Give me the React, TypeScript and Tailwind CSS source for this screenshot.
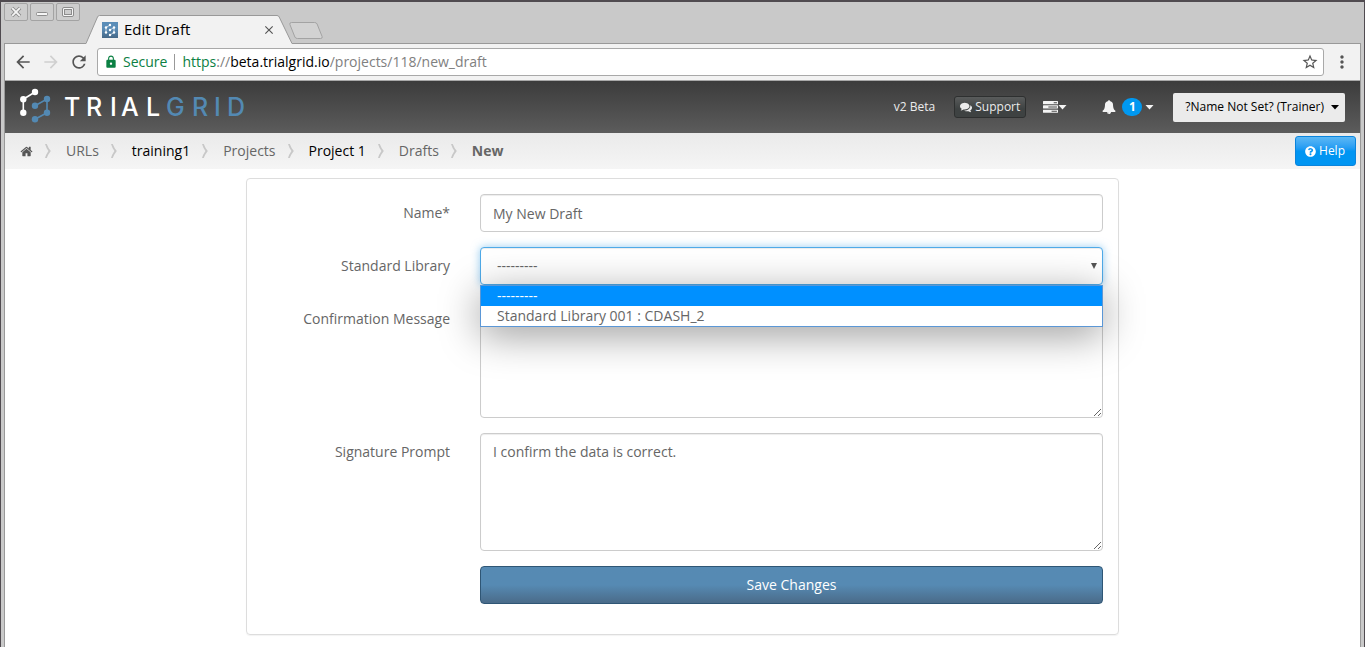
import React, { useState } from "react";
import { FaQuestionCircle } from "react-icons/fa";
import { MdArrowBack, MdArrowForward, MdRefresh, MdLock, MdStarBorder, MdMoreVert, MdClose } from "react-icons/md";

function Glyph({ d, className }: { d: string; className: string }) {
  return (
    <svg viewBox="0 0 1792 1792" className={className} fill="currentColor" aria-hidden="true">
      <path d={d} />
    </svg>
  );
}

const HOME =
  "M1472 992v480q0 26-19 45t-45 19h-384v-384h-256v384h-384q-26 0-45-19t-19-45v-480q0-1 .5-3t.5-3l575-474 575 474q1 2 1 6zm223-69l-62 74q-8 9-21 11h-3q-13 0-21-7l-692-577-692 577q-12 8-24 7-13-2-21-11l-62-74q-8-10-7-23.5t11-21.5l719-599q32-26 76-26t76 26l244 204v-195q0-14 9-23t23-9h192q14 0 23 9t9 23v408l219 182q10 8 11 21.5t-7 23.5z";
const BELL =
  "M912 1696q0-16-16-16-59 0-101.5-42.5t-42.5-101.5q0-16-16-16t-16 16q0 73 51.5 124.5t124.5 51.5q16 0 16-16zm816-288q0 52-38 90t-90 38h-448q0 106-75 181t-181 75-181-75-75-181h-448q-52 0-90-38t-38-90q50-42 91-88t85-119.5 74.5-158.5 50-206 19.5-260q0-152 117-282.5t307-158.5q-8-19-8-39 0-40 28-68t68-28 68 28 28 68q0 20-8 39 190 28 307 158.5t117 282.5q0 139 19.5 260t50 206 74.5 158.5 85 119.5 91 88z";
const TASKS =
  "M1024 1408h640v-128h-640v128zm-384-512h1024v-128h-1024v128zm640-512h384v-128h-384v128zm512 832v256q0 26-19 45t-45 19h-1664q-26 0-45-19t-19-45v-256q0-26 19-45t45-19h1664q26 0 45 19t19 45zm0-512v256q0 26-19 45t-45 19h-1664q-26 0-45-19t-19-45v-256q0-26 19-45t45-19h1664q26 0 45 19t19 45zm0-512v256q0 26-19 45t-45 19h-1664q-26 0-45-19t-19-45v-256q0-26 19-45t45-19h1664q26 0 45 19t19 45z";
const COMMENTS =
  "M1408 768q0 139-94 257t-256.5 186.5-353.5 68.5q-86 0-176-16-124 88-278 128-36 9-86 16h-3q-11 0-20.5-8t-11.5-21q-1-3-1-6.5t.5-6.5 2-6l2.5-5 3.5-5.5 4-5 4.5-5 4-4.5q5-6 23-25t26-29.5 22.5-29 25-38.5 20.5-44q-124-72-195-177t-71-224q0-139 94-257t256.5-186.5 353.5-68.5 353.5 68.5 256.5 186.5 94 257zm384 256q0 120-71 224.5t-195 176.5q10 24 20.5 44t25 38.5 22.5 29 26 29.5 23 25q1 1 4 4.5t4.5 5 4 5 3.5 5.5l2.5 5 2 6 .5 6.5-1 6.5q-3 14-13 22t-22 7q-50-7-86-16-154-40-278-128-90 16-176 16-271 0-472-132 58 4 88 4 161 0 309-45t264-129q125-92 192-212t67-254q0-77-23-152 129 71 204 178t75 230z";

function Caret({ className }: { className: string }) {
  return (
    <svg viewBox="0 0 8 5" className={className} fill="currentColor" aria-hidden="true">
      <path d="M0 0h8L4 4.6z" />
    </svg>
  );
}

function WindowButton({ label, children }: { label: string; children: React.ReactNode }) {
  return (
    <button aria-label={label} className="flex h-[18px] w-6 items-center justify-center rounded-xs border border-[#a3a3a3] bg-[#cdcdcd]">
      <svg viewBox="0 0 14 12" className="h-3 w-3.5" fill="none" aria-hidden="true">
        {children}
      </svg>
    </button>
  );
}

function TitleBar() {
  return (
    <div className="flex h-[41px] items-start">
      <div className="mt-px flex gap-0.5">
        <WindowButton label="Close window">
          <path d="M3 2l8 8M11 2l-8 8" stroke="#8c8c8c" strokeWidth="3.6" />
          <path d="M3.2 2.2l7.6 7.6M10.800 2.200l-7.600 7.600" stroke="#f5f5f5" strokeWidth="1.8" />
        </WindowButton>
        <WindowButton label="Minimize window">
          <rect x="1.5" y="6.5" width="11" height="3" rx="1" fill="#f5f5f5" stroke="#8c8c8c" />
        </WindowButton>
        <WindowButton label="Maximize window">
          <rect x="1.500" y="1.500" width="11" height="9" rx="1.5" fill="#f5f5f5" stroke="#8c8c8c" />
          <rect x="3.500" y="3.500" width="7" height="5" fill="#cdcdcd" stroke="#8c8c8c" />
        </WindowButton>
      </div>
      <div className="relative z-10 ml-1.5 mt-[13px] flex h-[29px] w-[206px] items-center px-4">
        <svg viewBox="0 0 206 29" className="absolute inset-0 h-full w-full" aria-hidden="true">
          <path d="M0 28.500L11.500 2q.7-1.500 2-1.500H191q1.500 0 2.200 1.500L206 28.500v.5H0z" fill="#f2f2f2" />
          <path d="M0 28.500L11.500 2q.7-1.500 2-1.500H191q1.500 0 2.200 1.500L206 28.500" fill="none" stroke="#999" />
        </svg>
        <svg viewBox="0 0 16 16" className="relative h-4 w-4" aria-hidden="true">
          <defs>
            <linearGradient id="fav" x1="0" y1="0" x2="0" y2="1">
              <stop offset="0.4" stopColor="#5a8db8" />
              <stop offset="1" stopColor="#466887" />
            </linearGradient>
          </defs>
          <rect width="16" height="16" fill="url(#fav)" />
          <g stroke="#dfe9f1" strokeWidth="0.8" fill="none">
            <path d="M8 3L4 5.500v5M8 8l4-2.500v5L8 13" />
          </g>
          <g fill="#fff">
            <circle cx="8" cy="3" r="1.200" />
            <circle cx="4" cy="5.500" r="1.200" />
            <circle cx="4" cy="10.500" r="1.200" />
            <circle cx="8" cy="8" r="1.200" />
            <circle cx="12" cy="5.500" r="1.200" />
            <circle cx="12" cy="10.500" r="1.200" />
            <circle cx="8" cy="13" r="1.200" />
          </g>
        </svg>
        <span className="relative ml-1.5 flex-1 text-[15px] text-black">Edit Draft</span>
        <button aria-label="Close tab" className="relative text-[#555]">
          <MdClose className="h-3.5 w-3.5" />
        </button>
      </div>
      <button aria-label="New tab" className="-ml-1 mt-[19px]">
        <svg viewBox="0 0 36 19" className="h-[19px] w-9" aria-hidden="true">
          <path d="M3.500 1.500h23q2 0 2.600 1.500l5 12.500q.7 2-1.500 2H9.500q-2 0-2.600-1.500l-5-12.500q-.6-2 1.600-2z" fill="#d2d2d2" stroke="#a3a3a3" />
        </svg>
      </button>
    </div>
  );
}

function Toolbar() {
  return (
    <div className="flex h-[37px] items-center border-t border-t-[#999] bg-[#f2f2f2] pl-2 text-[#555]">
      <button aria-label="Back"><MdArrowBack className="h-5 w-5" /></button>
      <button aria-label="Forward" className="ml-2 text-[#d0d0d0]"><MdArrowForward className="h-5 w-5" /></button>
      <button aria-label="Reload" className="ml-2"><MdRefresh className="h-5 w-5" /></button>
      <div className="ml-2 flex h-7 flex-1 items-center rounded-[3px] border border-[#a9a9a9] bg-white pl-1.5 pr-1 text-sm">
        <MdLock className="h-3.5 w-3.5 text-[#0b8043]" />
        <span className="ml-[5px] text-[#0b8043]">Secure</span>
        <span className="mx-[7px] h-4 w-px bg-[#999]" />
        <span className="flex-1 text-[#808080]">
          <span className="text-[#0b8043]">https</span>://<span className="text-black">beta.trialgrid.io</span>/projects/118/new_draft
        </span>
        <button aria-label="Bookmark"><MdStarBorder className="h-[18px] w-[18px]" /></button>
      </div>
      <button aria-label="Browser menu" className="mx-2"><MdMoreVert className="h-5 w-5" /></button>
    </div>
  );
}

function Logo() {
  return (
    <svg viewBox="0 0 245 52" className="h-[52px] w-[245px]" role="img" aria-label="TrialGrid">
      <g stroke="#fff" strokeWidth="1.600" fill="none"><path d="M30 11L18.300 18.300v13.400" /></g>
      <g fill="#fff">
        <circle cx="30" cy="11" r="3.200" />
        <circle cx="18.300" cy="18.300" r="3.200" />
        <circle cx="18.300" cy="31.700" r="3.200" />
      </g>
      <g stroke="#5389b3" strokeWidth="1.600" fill="none"><path d="M30 24.700L42 18v13.700L30 38.300" /></g>
      <g fill="#5389b3">
        <circle cx="42" cy="18" r="3.200" />
        <circle cx="30" cy="24.700" r="3.200" />
        <circle cx="42" cy="31.700" r="3.200" />
        <circle cx="30" cy="38.300" r="3.200" />
      </g>
      <text y="35" fontSize="25" fontWeight="500" fontFamily="Inter, sans-serif" fill="#fff" x="59 81 105 116 141">TRIAL</text>
      <text y="35" fontSize="25" fontWeight="500" fontFamily="Inter, sans-serif" fill="#5389b3" x="161 187 209 222">GRID</text>
    </svg>
  );
}

function AppHeader() {
  return (
    <header className="flex h-[52px] items-center bg-linear-to-b from-[#3c3c3c] to-[#5c5c5c] pr-[15px] text-xs text-[#ececec]">
      <Logo />
      <span className="ml-auto">v2 Beta</span>
      <button className="ml-[19px] flex h-[22px] items-center gap-[3px] rounded-[3px] border border-[#2e3030] bg-linear-to-b from-[#5a5c5c] to-[#3e4242] to-60% px-[5px]">
        <Glyph d={COMMENTS} className="h-3 w-3" />
        Support
      </button>
      <button aria-label="Tasks" className="ml-[17px] flex items-center text-[#f4f4f4]">
        <Glyph d={TASKS} className="h-[15px] w-[15px]" />
        <Caret className="h-[5px] w-[9px]" />
      </button>
      <button aria-label="Notifications" className="ml-[35px] flex items-center text-[#f4f4f4]">
        <Glyph d={BELL} className="h-3.5 w-3.5" />
        <span className="ml-1.5 flex h-[18px] w-5 items-center justify-center rounded-full bg-[#0098f0] text-xs font-bold text-white">1</span>
        <Caret className="ml-[3px] h-[5px] w-[9px]" />
      </button>
      <button className="ml-[19px] flex h-[29px] items-center gap-[7px] rounded-xs bg-[#ebebeb] pl-3 pr-1.5 text-black">
        ?Name Not Set? (Trainer)
        <Caret className="h-[5px] w-2" />
      </button>
    </header>
  );
}

const crumbs = [
  { text: "URLs", className: "text-[#666]" },
  { text: "training1", className: "text-black" },
  { text: "Projects", className: "text-[#666]" },
  { text: "Project 1", className: "text-black" },
  { text: "Drafts", className: "text-[#666]" },
  { text: "New", className: "font-bold text-[#666]" },
];

function Breadcrumbs() {
  return (
    <div className="flex h-9 items-center justify-between bg-linear-to-b from-[#eaeaea] to-[#f5f5f5] pl-[15px] pr-1">
      <nav aria-label="Breadcrumb">
        <ol className="flex items-center text-sm">
          <li>
            <a href="#home" aria-label="Home"><Glyph d={HOME} className="h-[13px] w-[13px] text-[#555]" /></a>
          </li>
          {crumbs.map((c) => (
            <li key={c.text} className="flex items-center">
              <svg viewBox="0 0 6 14" className="ml-3 mr-[15px] h-3.5 w-1.5" aria-hidden="true">
                <path d="M0 0h1.800Q3 3.500 5.800 7 3 10.500 1.800 14H0Q1 10.500 3.400 7 1 3.500 0 0z" fill="#c8c8c8" />
              </svg>
              <a href="#crumb" className={c.className}>{c.text}</a>
            </li>
          ))}
        </ol>
      </nav>
      <button className="flex h-[30px] items-center gap-[3px] rounded-[3px] border border-[#0a84dc] bg-linear-to-b from-[#5bb8f5] to-[#0095f2] to-50% pl-[9px] pr-2.5 text-xs text-white">
        <FaQuestionCircle className="h-[11px] w-[11px]" />
        Help
      </button>
    </div>
  );
}

function Label({ htmlFor, children }: { htmlFor: string; children: React.ReactNode }) {
  return <label htmlFor={htmlFor} className="pt-2 text-right leading-[21px]">{children}</label>;
}

const options = ["---------", "Standard Library 001 : CDASH_2"];

function DraftForm() {
  const [library, setLibrary] = useState(options[0]);
  return (
    <form
      onSubmit={(e) => e.preventDefault()}
      className="mx-auto mt-[9px] grid max-w-[873px] grid-cols-[188px_1fr] gap-x-[30px] gap-y-[15px] rounded border border-[#ddd] px-[15px] pb-[30px] pt-[15px] text-sm text-[#666] shadow-[0_1px_1px_rgba(0,0,0,0.05)]"
    >
      <Label htmlFor="name">Name*</Label>
      <input id="name" defaultValue="My New Draft" className="h-[38px] w-full rounded border border-[#ccc] px-3 shadow-[inset_0_1px_1px_rgba(0,0,0,0.075)] outline-none" />

      <Label htmlFor="library">Standard Library</Label>
      <div className="relative h-[38px]">
        <select
          id="library"
          value={library}
          onChange={(e) => setLibrary(e.target.value)}
          className="h-[38px] w-full appearance-none rounded border border-[#4faae8] bg-white px-4 shadow-[inset_0_1px_1px_rgba(0,0,0,0.075),0_0_8px_rgba(79,170,232,0.6)] outline-none"
        >
          {options.map((o) => (
            <option key={o}>{o}</option>
          ))}
        </select>
        <svg viewBox="0 0 6 6" className="pointer-events-none absolute right-1.5 top-4 h-1.5 w-1.5" fill="#555" aria-hidden="true">
          <path d="M0 0h6L3 6z" />
        </svg>
        <ul
          role="listbox"
          aria-label="Standard Library options"
          className="absolute inset-x-0 top-full z-10 border border-[#5b97d6] bg-white leading-5 shadow-[0_8px_40px_rgba(0,0,0,0.4)]"
        >
          {options.map((o) => (
            <li
              key={o}
              role="option"
              aria-selected={o === library}
              onClick={() => setLibrary(o)}
              className={o === library ? "bg-[#0090ff] px-4 text-white" : "px-4"}
            >
              {o}
            </li>
          ))}
        </ul>
      </div>

      <Label htmlFor="confirmation">Confirmation Message</Label>
      <textarea id="confirmation" className="block h-[118px] w-full rounded border border-[#ccc] px-3 py-2 shadow-[inset_0_1px_1px_rgba(0,0,0,0.075)] outline-none" />

      <Label htmlFor="prompt">Signature Prompt</Label>
      <textarea
        id="prompt"
        defaultValue="I confirm the data is correct."
        className="block h-[118px] w-full rounded border border-[#ccc] px-3 py-2 shadow-[inset_0_1px_1px_rgba(0,0,0,0.075)] outline-none"
      />

      <button
        type="submit"
        className="col-start-2 h-[38px] rounded border border-[#2f5675] bg-linear-to-b from-[#568ab3] from-50% to-[#4a6b89] text-white"
      >
        Save Changes
      </button>
    </form>
  );
}

export default function App() {
  return (
    <div className="flex min-h-screen flex-col border-x border-t-2 border-[#504b50] bg-[#c9c9c9] px-[3px] font-['Open_Sans','Noto_Sans',sans-serif]">
      <TitleBar />
      <div className="flex flex-1 flex-col border-x border-[#999]">
        <Toolbar />
        <main className="flex-1 border-t border-[#a9a9a9] bg-white">
          <AppHeader />
          <Breadcrumbs />
          <DraftForm />
        </main>
      </div>
    </div>
  );
}
